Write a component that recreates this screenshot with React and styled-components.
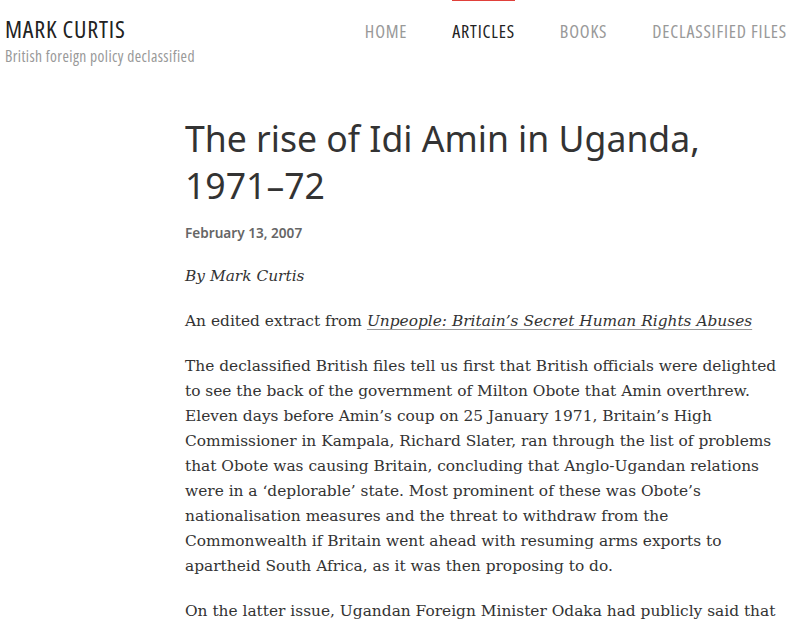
import styled, { createGlobalStyle } from 'styled-components';

const GlobalStyle = createGlobalStyle`
  body {
    margin: 0;
    background: #fff;
    color: #333;
  }
`;

const nav = [
  { label: 'HOME' },
  { label: 'ARTICLES', active: true },
  { label: 'BOOKS' },
  { label: 'DECLASSIFIED FILES' },
];

const App = () => {
  return (
    <Page>
      <GlobalStyle />
      <Header>
        <Brand>
          <SiteTitle>MARK CURTIS</SiteTitle>
          <Tagline>British foreign policy declassified</Tagline>
        </Brand>
        <Nav>
          {nav.map((item) => (
            <NavItem key={item.label} $active={item.active}>
              {item.label}
            </NavItem>
          ))}
        </Nav>
      </Header>
      <Article>
        <Title>The rise of Idi Amin in Uganda, 1971–72</Title>
        <PostDate>February 13, 2007</PostDate>
        <Body>
          <p>
            <em>By Mark Curtis</em>
          </p>
          <p>
            An edited extract from{' '}
            <BookLink href="#">
              <em>Unpeople: Britain’s Secret Human Rights Abuses</em>
            </BookLink>
          </p>
          <p>
            The declassified British files tell us first that British officials were delighted
            to see the back of the government of Milton Obote that Amin overthrew. Eleven days
            before Amin’s coup on 25 January 1971, Britain’s High Commissioner in Kampala,
            Richard Slater, ran through the list of problems that Obote was causing Britain,
            concluding that Anglo-Ugandan relations were in a ‘deplorable’ state. Most
            prominent of these was Obote’s nationalisation measures and the threat to withdraw
            from the Commonwealth if Britain went ahead with resuming arms exports to apartheid
            South Africa, as it was then proposing to do.
          </p>
          <p>
            On the latter issue, Ugandan Foreign Minister Odaka had publicly said that Uganda
            would leave the Commonwealth if Britain resumed arms sales.
          </p>
        </Body>
      </Article>
    </Page>
  );
};

export default App;

const condensed = `'Open Sans', 'Roboto Condensed', sans-serif`;

const Page = styled.div`
  width: 804px;
  height: 622px;
  overflow: hidden;
`;

const Header = styled.header`
  display: flex;
  justify-content: space-between;
  align-items: flex-start;
  padding: 0 17px 0 5px;
`;

const Brand = styled.div`
  padding-top: 15px;
`;

const SiteTitle = styled.div`
  font-family: ${condensed};
  font-stretch: 75%;
  font-size: 24px;
  letter-spacing: 0.8px;
  line-height: 28px;
  color: #222;
`;

const Tagline = styled.div`
  font-family: ${condensed};
  font-stretch: 75%;
  font-size: 15.6px;
  letter-spacing: 0.4px;
  line-height: 18px;
  margin-top: 4px;
  color: #999;
`;

const Nav = styled.nav`
  display: flex;
  gap: 45px;
`;

const NavItem = styled.a`
  font-family: ${condensed};
  font-stretch: 75%;
  font-size: 18px;
  letter-spacing: 0.8px;
  line-height: 22px;
  padding-top: 19px;
  border-top: 1px solid ${(p) => (p.$active ? '#e0403a' : 'transparent')};
  color: ${(p) => (p.$active ? '#222' : '#999')};
`;

const Article = styled.main`
  width: 600px;
  margin: 0 0 0 185px;
  padding-top: 50px;
`;

const Title = styled.h1`
  font-family: 'Noto Sans', 'Open Sans', sans-serif;
  font-weight: 400;
  font-size: 35.6px;
  line-height: 47px;
  color: #333;
  margin: 0;
`;

const PostDate = styled.div`
  font-family: 'Noto Sans', 'Open Sans', sans-serif;
  font-weight: 600;
  font-size: 13.6px;
  color: #666;
  margin-top: 14px;
`;

const Body = styled.div`
  font-family: 'DejaVu Serif', serif;
  font-size: 15.4px;
  line-height: 25px;
  color: #333;
  margin-top: 22px;

  p {
    margin: 0 0 20px;
  }
`;

const BookLink = styled.a`
  color: #333;
  text-decoration: underline;
  text-decoration-color: #999;
  text-underline-offset: 3px;
`;
